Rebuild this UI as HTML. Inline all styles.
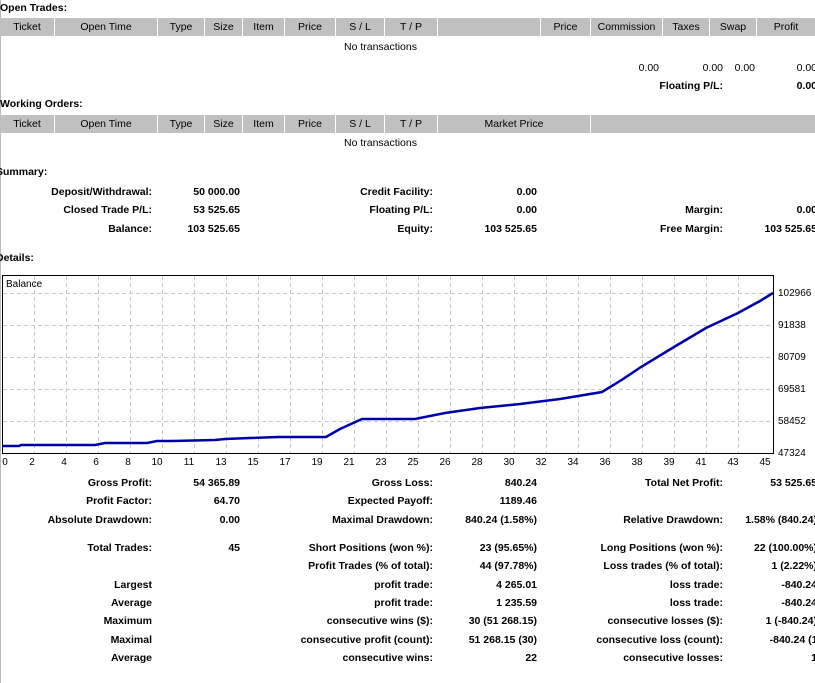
<!DOCTYPE html>
<html><head><meta charset="utf-8"><style>
body{margin:0;width:815px;height:683px;overflow:hidden;background:#fff;position:relative;font-family:"Liberation Sans","DejaVu Sans",sans-serif;font-size:10.5px;color:#000}
.a{position:absolute;white-space:nowrap;line-height:13px}
.b{font-weight:bold}
.r{text-align:right}
.h{position:absolute;background:#c0c0c0;height:18px;line-height:18px;text-align:center;font-size:10.5px}
</style></head><body>
<div style="position:absolute;left:0;top:0;width:1px;height:683px;background:#bbb"></div>
<div class="a b" style="left:0;top:2px">Open Trades:</div>
<div class="h" style="left:0;top:18px;width:54px">Ticket</div>
<div class="h" style="left:55px;top:18px;width:102px">Open Time</div>
<div class="h" style="left:158px;top:18px;width:46px">Type</div>
<div class="h" style="left:205px;top:18px;width:37px">Size</div>
<div class="h" style="left:243px;top:18px;width:41px">Item</div>
<div class="h" style="left:285px;top:18px;width:50px">Price</div>
<div class="h" style="left:336px;top:18px;width:48px">S / L</div>
<div class="h" style="left:385px;top:18px;width:52px">T / P</div>
<div class="h" style="left:438px;top:18px;width:102px"></div>
<div class="h" style="left:541px;top:18px;width:49px">Price</div>
<div class="h" style="left:591px;top:18px;width:71px">Commission</div>
<div class="h" style="left:663px;top:18px;width:46px">Taxes</div>
<div class="h" style="left:710px;top:18px;width:46px">Swap</div>
<div class="h" style="left:757px;top:18px;width:58px">Profit</div>
<div class="a" style="left:344px;top:41px">No transactions</div>
<div class="a r" style="right:156px;top:62px">0.00</div>
<div class="a r" style="right:92px;top:62px">0.00</div>
<div class="a r" style="right:60px;top:62px">0.00</div>
<div class="a r" style="right:-2px;top:62px">0.00</div>
<div class="a b r" style="right:92px;top:80px">Floating P/L:</div>
<div class="a b r" style="right:-2px;top:80px">0.00</div>

<div class="a b" style="left:0;top:98px">Working Orders:</div>
<div class="h" style="left:0;top:115px;width:54px">Ticket</div>
<div class="h" style="left:55px;top:115px;width:102px">Open Time</div>
<div class="h" style="left:158px;top:115px;width:46px">Type</div>
<div class="h" style="left:205px;top:115px;width:37px">Size</div>
<div class="h" style="left:243px;top:115px;width:41px">Item</div>
<div class="h" style="left:285px;top:115px;width:50px">Price</div>
<div class="h" style="left:336px;top:115px;width:48px">S / L</div>
<div class="h" style="left:385px;top:115px;width:52px">T / P</div>
<div class="h" style="left:438px;top:115px;width:152px">Market Price</div>
<div class="h" style="left:591px;top:115px;width:224px"></div>
<div class="a" style="left:344px;top:137px">No transactions</div>

<div class="a b" style="left:-4px;top:166px">Summary:</div>
<div class="a b r" style="right:663px;top:186px">Deposit/Withdrawal:</div>
<div class="a b r" style="right:575px;top:186px">50 000.00</div>
<div class="a b r" style="right:382px;top:186px">Credit Facility:</div>
<div class="a b r" style="right:278px;top:186px">0.00</div>
<div class="a b r" style="right:663px;top:204px">Closed Trade P/L:</div>
<div class="a b r" style="right:575px;top:204px">53 525.65</div>
<div class="a b r" style="right:382px;top:204px">Floating P/L:</div>
<div class="a b r" style="right:278px;top:204px">0.00</div>
<div class="a b r" style="right:92px;top:204px">Margin:</div>
<div class="a b r" style="right:-2px;top:204px">0.00</div>
<div class="a b r" style="right:663px;top:223px">Balance:</div>
<div class="a b r" style="right:575px;top:223px">103 525.65</div>
<div class="a b r" style="right:382px;top:223px">Equity:</div>
<div class="a b r" style="right:278px;top:223px">103 525.65</div>
<div class="a b r" style="right:92px;top:223px">Free Margin:</div>
<div class="a b r" style="right:-2px;top:223px">103 525.65</div>

<div class="a b" style="left:-4px;top:252px">Details:</div>

<svg style="position:absolute;left:0;top:270px" width="815" height="200" font-family="Liberation Sans, sans-serif" font-size="10">
<rect x="2.5" y="5.5" width="771" height="178" fill="#fff" stroke="#000"/>
<g stroke="#c8c8c8" stroke-dasharray="4,3">
<line x1="3" x2="773" y1="23.5" y2="23.5"/><line x1="3" x2="773" y1="55.5" y2="55.5"/><line x1="3" x2="773" y1="87.5" y2="87.5"/><line x1="3" x2="773" y1="119.5" y2="119.5"/><line x1="3" x2="773" y1="151.5" y2="151.5"/>
<line x1="34.5" x2="34.5" y1="6" y2="183"/><line x1="66.5" x2="66.5" y1="6" y2="183"/><line x1="98.5" x2="98.5" y1="6" y2="183"/><line x1="130.5" x2="130.5" y1="6" y2="183"/><line x1="162.5" x2="162.5" y1="6" y2="183"/><line x1="194.5" x2="194.5" y1="6" y2="183"/><line x1="226.5" x2="226.5" y1="6" y2="183"/><line x1="258.5" x2="258.5" y1="6" y2="183"/><line x1="290.5" x2="290.5" y1="6" y2="183"/><line x1="322.5" x2="322.5" y1="6" y2="183"/><line x1="354.5" x2="354.5" y1="6" y2="183"/><line x1="386.5" x2="386.5" y1="6" y2="183"/><line x1="418.5" x2="418.5" y1="6" y2="183"/><line x1="450.5" x2="450.5" y1="6" y2="183"/><line x1="482.5" x2="482.5" y1="6" y2="183"/><line x1="514.5" x2="514.5" y1="6" y2="183"/><line x1="546.5" x2="546.5" y1="6" y2="183"/><line x1="578.5" x2="578.5" y1="6" y2="183"/><line x1="610.5" x2="610.5" y1="6" y2="183"/><line x1="642.5" x2="642.5" y1="6" y2="183"/><line x1="674.5" x2="674.5" y1="6" y2="183"/><line x1="706.5" x2="706.5" y1="6" y2="183"/><line x1="738.5" x2="738.5" y1="6" y2="183"/>
</g>
<text x="6" y="17">Balance</text>
<polyline fill="none" stroke="#0000a8" stroke-width="2.5" points="3,176 19,176 21,175 95,175 105,173 147,173 157,171 172,171 215,170 225,169 250,168 278,167 326,167 340,159 362,149 415,149 445,143 480,138 520,134 560,129 602,122 620,111 641,97 674,77 706,58 738,43 760,31 773,23"/>
<g text-anchor="start">
<text x="778" y="26">102966</text><text x="778" y="58">91838</text><text x="778" y="90">80709</text><text x="778" y="122">69581</text><text x="778" y="154">58452</text><text x="778" y="186">47324</text>
</g>
<g text-anchor="middle">
<text x="5" y="195">0</text><text x="32" y="195">2</text><text x="64" y="195">4</text><text x="96" y="195">6</text><text x="128" y="195">8</text><text x="157" y="195">10</text><text x="189" y="195">11</text><text x="221" y="195">13</text><text x="253" y="195">15</text><text x="285" y="195">17</text><text x="317" y="195">19</text><text x="349" y="195">21</text><text x="381" y="195">23</text><text x="413" y="195">25</text><text x="445" y="195">26</text><text x="477" y="195">28</text><text x="509" y="195">30</text><text x="541" y="195">32</text><text x="573" y="195">34</text><text x="605" y="195">36</text><text x="637" y="195">38</text><text x="669" y="195">39</text><text x="701" y="195">41</text><text x="733" y="195">43</text><text x="765" y="195">45</text>
</g>
</svg>

<div class="a b r" style="right:663px;top:477px">Gross Profit:</div>
<div class="a b r" style="right:575px;top:477px">54 365.89</div>
<div class="a b r" style="right:382px;top:477px">Gross Loss:</div>
<div class="a b r" style="right:278px;top:477px">840.24</div>
<div class="a b r" style="right:92px;top:477px">Total Net Profit:</div>
<div class="a b r" style="right:-2px;top:477px">53 525.65</div>

<div class="a b r" style="right:663px;top:495px">Profit Factor:</div>
<div class="a b r" style="right:575px;top:495px">64.70</div>
<div class="a b r" style="right:382px;top:495px">Expected Payoff:</div>
<div class="a b r" style="right:278px;top:495px">1189.46</div>

<div class="a b r" style="right:663px;top:514px">Absolute Drawdown:</div>
<div class="a b r" style="right:575px;top:514px">0.00</div>
<div class="a b r" style="right:382px;top:514px">Maximal Drawdown:</div>
<div class="a b r" style="right:278px;top:514px">840.24 (1.58%)</div>
<div class="a b r" style="right:92px;top:514px">Relative Drawdown:</div>
<div class="a b r" style="right:-2px;top:514px">1.58% (840.24)</div>

<div class="a b r" style="right:663px;top:542px">Total Trades:</div>
<div class="a b r" style="right:575px;top:542px">45</div>
<div class="a b r" style="right:382px;top:542px">Short Positions (won %):</div>
<div class="a b r" style="right:278px;top:542px">23 (95.65%)</div>
<div class="a b r" style="right:92px;top:542px">Long Positions (won %):</div>
<div class="a b r" style="right:-2px;top:542px">22 (100.00%)</div>

<div class="a b r" style="right:382px;top:560px">Profit Trades (% of total):</div>
<div class="a b r" style="right:278px;top:560px">44 (97.78%)</div>
<div class="a b r" style="right:92px;top:560px">Loss trades (% of total):</div>
<div class="a b r" style="right:-2px;top:560px">1 (2.22%)</div>

<div class="a b r" style="right:663px;top:579px">Largest</div>
<div class="a b r" style="right:382px;top:579px">profit trade:</div>
<div class="a b r" style="right:278px;top:579px">4 265.01</div>
<div class="a b r" style="right:92px;top:579px">loss trade:</div>
<div class="a b r" style="right:-2px;top:579px">-840.24</div>

<div class="a b r" style="right:663px;top:597px">Average</div>
<div class="a b r" style="right:382px;top:597px">profit trade:</div>
<div class="a b r" style="right:278px;top:597px">1 235.59</div>
<div class="a b r" style="right:92px;top:597px">loss trade:</div>
<div class="a b r" style="right:-2px;top:597px">-840.24</div>

<div class="a b r" style="right:663px;top:615px">Maximum</div>
<div class="a b r" style="right:382px;top:615px">consecutive wins ($):</div>
<div class="a b r" style="right:278px;top:615px">30 (51 268.15)</div>
<div class="a b r" style="right:92px;top:615px">consecutive losses ($):</div>
<div class="a b r" style="right:-2px;top:615px">1 (-840.24)</div>

<div class="a b r" style="right:663px;top:634px">Maximal</div>
<div class="a b r" style="right:382px;top:634px">consecutive profit (count):</div>
<div class="a b r" style="right:278px;top:634px">51 268.15 (30)</div>
<div class="a b r" style="right:92px;top:634px">consecutive loss (count):</div>
<div class="a b r" style="right:-6px;top:634px">-840.24 (1)</div>

<div class="a b r" style="right:663px;top:652px">Average</div>
<div class="a b r" style="right:382px;top:652px">consecutive wins:</div>
<div class="a b r" style="right:278px;top:652px">22</div>
<div class="a b r" style="right:92px;top:652px">consecutive losses:</div>
<div class="a b r" style="right:-2px;top:652px">1</div>
</body></html>
